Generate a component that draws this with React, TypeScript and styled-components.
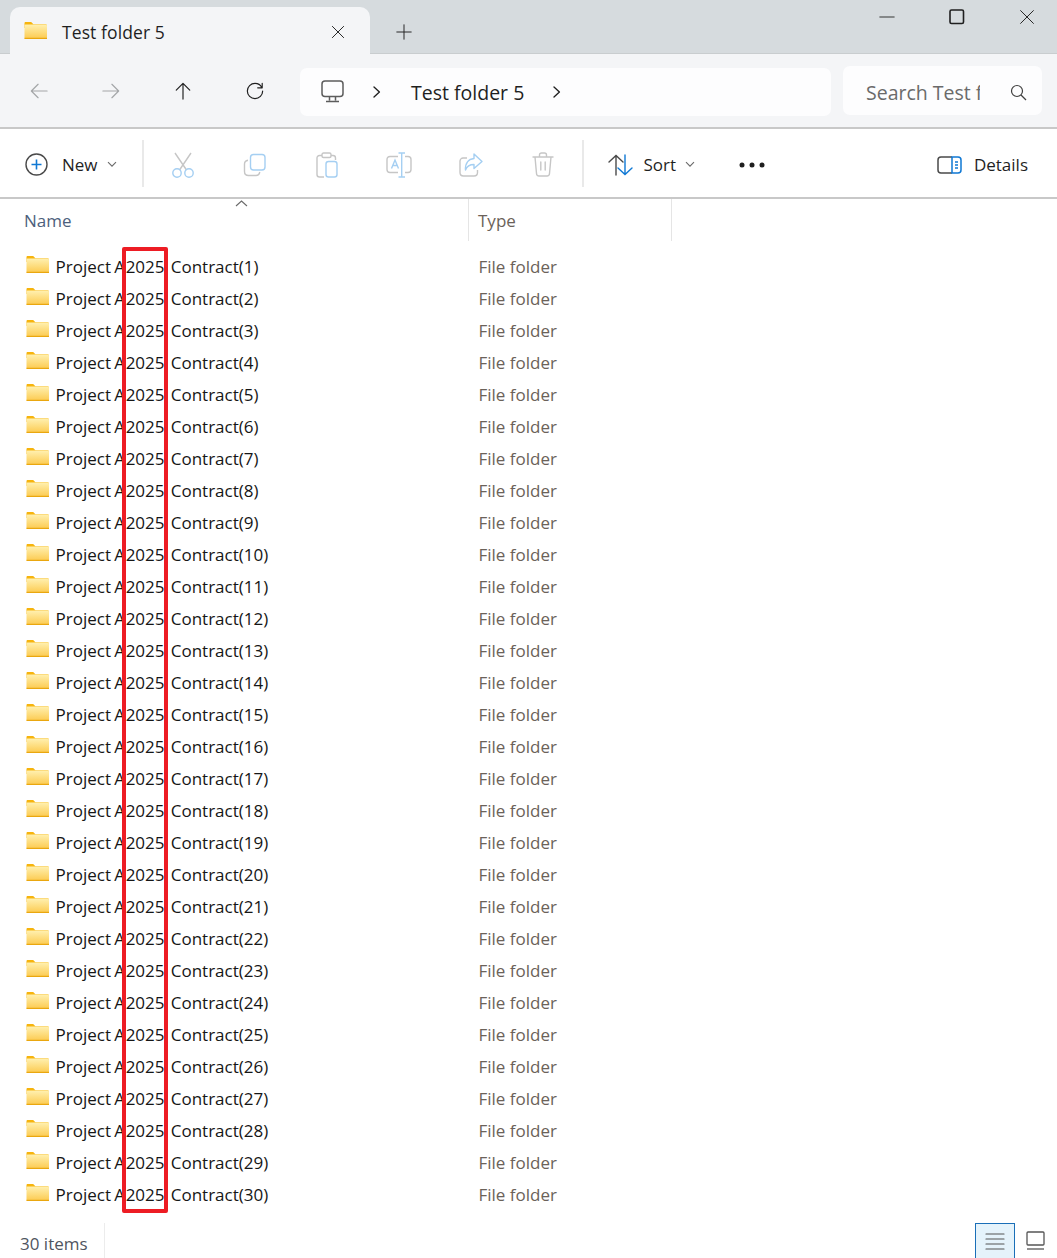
import React from 'react';
import styled, { createGlobalStyle } from 'styled-components';

const GlobalStyle = createGlobalStyle`
  html, body { margin: 0; padding: 0; background: #fff; }
  body { font-family: "Open Sans", "Noto Sans", "Liberation Sans", sans-serif; color: #1b1b1b; }
  * { box-sizing: border-box; }
`;

const Window = styled.div`
  position: relative;
  width: 1057px;
  height: 1258px;
  overflow: hidden;
  display: flex;
  flex-direction: column;
  background: #fff;
`;

const TabBar = styled.div`
  height: 54px;
  flex: none;
  display: flex;
  align-items: flex-end;
  padding-left: 10px;
  background: #d6dbde;
  border-bottom: 1px solid #c9cdcf;
`;

const Tab = styled.div`
  width: 360px;
  height: 47px;
  margin-bottom: -1px;
  padding: 2px 24px 0 14px;
  display: flex;
  align-items: center;
  background: #f4f5f7;
  border-radius: 10px 10px 0 0;
`;

const TabTitle = styled.span`
  flex: 1;
  margin-left: 15px;
  font-size: 17.5px;
  font-weight: 500;
  letter-spacing: 0.1px;
  color: #1f1f1f;
`;

const NewTab = styled.div`
  margin: 0 0 10px 26px;
  height: 22px;
  display: flex;
  align-items: center;
`;

const WindowControls = styled.div`
  margin-left: auto;
  align-self: flex-start;
  display: flex;
  align-items: center;
  gap: 54px;
  padding: 9px 22px 0 0;
`;

const NavRow = styled.div`
  height: 75px;
  flex: none;
  display: flex;
  align-items: center;
  padding: 0 15px 0 30px;
  background: #f4f5f7;
  border-bottom: 2px solid #c8c8c8;
`;

const NavButtons = styled.div`
  width: 270px;
  display: flex;
  gap: 54px;
`;

const AddressBox = styled.div`
  width: 531px;
  height: 48px;
  margin-top: 2px;
  display: flex;
  align-items: center;
  padding-left: 21px;
  background: #fdfdfe;
  border-radius: 7px;
`;

const Crumb = styled.span`
  margin: 2px 27px 0 28px;
  font-size: 19.5px;
  color: #1f1f1f;
`;

const Computer = styled.svg`
  margin-right: 27px;
`;

const SearchBox = styled.div`
  width: 199px;
  height: 49px;
  margin-left: 12px;
  display: flex;
  align-items: center;
  padding: 3px 15px 0 23px;
  background: #fdfdfe;
  border-radius: 7px;
`;

const SearchText = styled.span`
  width: 114px;
  height: 27px;
  overflow: hidden;
  white-space: nowrap;
  font-size: 19.5px;
  color: #6a6a6a;
`;

const SearchIcon = styled.svg`
  margin-left: auto;
`;

const CommandBar = styled.div`
  height: 70px;
  flex: none;
  display: flex;
  align-items: center;
  padding: 3px 29px 0 25px;
  border-bottom: 2px solid #c8c8c8;
`;

const Command = styled.div<{ $width?: number; $offset?: number }>`
  width: ${p => (p.$width ? `${p.$width}px` : 'auto')};
  margin-left: ${p => p.$offset ?? 0}px;
  display: flex;
  align-items: center;
  justify-content: ${p => (p.$width ? 'center' : 'flex-start')};
`;

const CommandLabel = styled.span<{ $gap: number }>`
  margin: 0 9px 0 ${p => p.$gap}px;
  font-size: 17px;
  color: #1f1f1f;
`;

const Divider = styled.div<{ $left: number; $right: number }>`
  width: 2px;
  height: 47px;
  margin: -3px ${p => p.$right}px 0 ${p => p.$left}px;
  background: #e9e9e9;
`;

const DetailsLabel = styled.span`
  margin-left: 12px;
  font-size: 17px;
  color: #1f1f1f;
`;

const Spacer = styled.div`
  flex: 1;
`;

const ColumnHeader = styled.div`
  position: relative;
  height: 42px;
  flex: none;
  display: flex;
  font-size: 17px;
`;

const SortCaret = styled.svg`
  position: absolute;
  left: 235px;
  top: 1px;
`;

const HeaderCell = styled.div<{ $width: number; $pad: number }>`
  width: ${p => p.$width}px;
  padding: 10px 0 0 ${p => p.$pad}px;
  border-right: 1px solid #e5e5e5;
  color: ${p => (p.$pad === 24 ? '#4d5f7c' : '#6b6259')};
`;

const FileList = styled.div`
  flex: 1;
  padding-top: 10px;
`;

const FileRow = styled.div`
  height: 32px;
  display: flex;
  align-items: center;
  padding: 0 0 2px 26px;
  font-size: 17px;
`;

const FolderSlot = styled.div<{ $lift: number }>`
  display: flex;
  margin-bottom: ${p => p.$lift}px;
`;

const FileName = styled.span`
  width: 423px;
  margin-left: 6.5px;
  white-space: nowrap;
  word-spacing: -1.2px;
  color: #161616;
`;

const Year = styled.span`
  margin: 0 3px 0 -2.5px;
`;

const FileType = styled.span`
  color: #6b6259;
`;

const StatusBar = styled.div`
  height: 47px;
  flex: none;
  display: flex;
  align-items: flex-end;
  padding: 0 2px 0 20px;
`;

const ItemCount = styled.span`
  width: 85px;
  height: 35px;
  padding-top: 5px;
  display: flex;
  align-items: center;
  font-size: 17px;
  color: #4f5560;
  border-right: 1px solid #ececec;
`;

const ViewToggle = styled.div<{ $active?: boolean }>`
  width: 40px;
  height: 35px;
  display: flex;
  align-items: center;
  justify-content: center;
  background: ${p => (p.$active ? '#e5f3fb' : 'transparent')};
  border: ${p => (p.$active ? '1px solid #1a6fb8' : 'none')};
  border-bottom: none;
`;

const Highlight = styled.div`
  position: absolute;
  left: 122px;
  top: 247px;
  width: 46px;
  height: 966px;
  border: 4px solid #ed1c24;
  border-radius: 2px;
  pointer-events: none;
`;

const FolderIcon = ({ id }: { id: string }) => (
  <svg width="23" height="17" viewBox="0 0 23 17">
    <defs>
      <linearGradient id={id} x1="0" y1="0" x2="0" y2="1">
        <stop offset="0" stopColor="#fff0b0" />
        <stop offset="1" stopColor="#fcca4e" />
      </linearGradient>
    </defs>
    <path d="M0.5 1.2C0.5 0.6 1 0 1.6 0H7.2L9.4 2.2H21.6C22.3 2.2 23 2.9 23 3.6V6H0.5Z" fill="#f6b40e" />
    <rect x="0.5" y="2.6" width="22.5" height="14.4" rx="1" fill={`url(#${id})`} />
    <rect x="0.5" y="15.8" width="22.5" height="1.2" fill="#eaa70f" />
  </svg>
);

const Line = ({ d, color = '#1f1f1f', size = 20, width = 1.3 }: { d: string; color?: string; size?: number; width?: number }) => (
  <svg width={size} height={size} viewBox="0 0 20 20" fill="none" stroke={color} strokeWidth={width} strokeLinecap="round" strokeLinejoin="round">
    <path d={d} />
  </svg>
);

const Cut = () => (
  <svg width="24" height="26" viewBox="0 0 24 26" fill="none" strokeWidth="1.4">
    <path d="M4 1L15.5 18M20 1L8.5 18" stroke="#c6c6c6" />
    <circle cx="6" cy="21" r="4.2" stroke="#a5cff2" />
    <circle cx="18" cy="21" r="4.2" stroke="#a5cff2" />
  </svg>
);

const Copy = () => (
  <svg width="24" height="24" viewBox="0 0 24 24" fill="none" strokeWidth="1.4">
    <path d="M5 7.2C2.8 7.6 1.5 9 1.5 11V18.5C1.5 21 3 22.5 5.5 22.5H13C15 22.5 16.4 21.2 16.8 19" stroke="#c6c6c6" />
    <rect x="7.5" y="1.5" width="14.5" height="15.5" rx="3" stroke="#a5cff2" />
  </svg>
);

const Paste = () => (
  <svg width="22" height="26" viewBox="0 0 22 26" fill="none" strokeWidth="1.4">
    <path d="M6 3.5H3.5C2 3.5 1 4.5 1 6V22.5C1 24 2 25 3.5 25H8M15 3.5H17C18.5 3.5 19.5 4.5 19.5 6V8" stroke="#c6c6c6" />
    <rect x="6" y="1" width="9" height="4.5" rx="1.5" stroke="#c6c6c6" />
    <rect x="10" y="9.5" width="11" height="15.5" rx="2.5" stroke="#a5cff2" />
  </svg>
);

const Rename = () => (
  <svg width="26" height="26" viewBox="0 0 26 26" fill="none" strokeWidth="1.4">
    <path d="M12 4.5H4C2.2 4.5 1 5.7 1 7.5V17.5C1 19.3 2.2 20.5 4 20.5H12M19 4.5H22C23.8 4.5 25 5.7 25 7.5V17.5C25 19.3 23.8 20.5 22 20.5H19" stroke="#c6c6c6" />
    <path d="M12.5 1H19M15.7 1V25M12.5 25H19M5.5 16.5L9 8L12.5 16.5M6.8 13.5H11.2" stroke="#a5cff2" />
  </svg>
);

const Share = () => (
  <svg width="24" height="24" viewBox="0 0 24 24" fill="none" strokeWidth="1.4" strokeLinejoin="round">
    <path d="M8 5H4C2.5 5 1 6.5 1 8V19.5C1 21.5 2.5 23 4.5 23H15C17 23 18.5 21.5 18.5 19.5V17" stroke="#c6c6c6" />
    <path d="M15 1L23 8.5L15 15.5V11.5C10.5 11.5 8 13 6.5 17C6 10 9.5 6 15 5.5Z" stroke="#a5cff2" />
  </svg>
);

const Trash = () => (
  <svg width="22" height="25" viewBox="0 0 22 25" fill="none" stroke="#c6c6c6" strokeWidth="1.4" strokeLinecap="round">
    <path d="M1 5H21M7.5 5V3C7.5 1.8 8.3 1 9.5 1H12.5C13.7 1 14.5 1.8 14.5 3V5M3 5L4.5 21.5C4.6 23 5.6 24 7 24H15C16.4 24 17.4 23 17.5 21.5L19 5M8.8 10V18M13.2 10V18" />
  </svg>
);

const Chevron = () => (
  <svg width="10" height="7" viewBox="0 0 10 7" fill="none" stroke="#6a6a6a" strokeWidth="1.1">
    <path d="M1 1.2L5 5.2L9 1.2" />
  </svg>
);

const items = Array.from({ length: 30 }, (_, i) => i + 1);

export default function App() {
  return (
    <Window>
      <GlobalStyle />
      <TabBar>
        <Tab>
          <FolderSlot $lift={2}><FolderIcon id="tab-folder" /></FolderSlot>
          <TabTitle>Test folder 5</TabTitle>
          <Line size={16} width={1.2} d="M3 3L17 17M17 3L3 17" />
        </Tab>
        <NewTab>
          <Line size={16} width={1.2} d="M10 1V19M1 10H19" />
        </NewTab>
        <WindowControls>
          <Line size={16} width={1.1} d="M1 10H19" />
          <svg width="16" height="16" viewBox="0 0 16 16" fill="none" stroke="#1f1f1f" strokeWidth="1.6">
            <rect x="1" y="1" width="13.5" height="13.5" rx="1.5" />
          </svg>
          <Line size={16} width={1.2} d="M2 2L18 18M18 2L2 18" />
        </WindowControls>
      </TabBar>
      <NavRow>
        <NavButtons>
          <Line size={18} color="#a4a6a8" d="M19 10H1.5M9 2.5L1.5 10L9 17.5" />
          <Line size={18} color="#a4a6a8" d="M1 10H18.5M11 2.5L18.5 10L11 17.5" />
          <Line size={18} d="M10 19V1.5M2.5 9L10 1.5L17.5 9" />
          <Line size={18} d="M17.5 6C16 3 13.2 1.5 10 1.5C5.3 1.5 1.5 5.3 1.5 10C1.5 14.7 5.3 18.5 10 18.5C14.7 18.5 18.5 14.7 18.5 10M18 1.5V6.5H13" />
        </NavButtons>
        <AddressBox>
          <Computer width="23" height="23" viewBox="0 0 23 23" fill="none" stroke="#5c5c5c" strokeWidth="1.5">
            <rect x="1" y="1" width="21" height="15.5" rx="3" />
            <path d="M8.5 17V20.5M14.5 17V20.5M5 21.5H18" />
          </Computer>
          <Line size={12} width={2.2} d="M5 1.5L14 10L5 18.5" />
          <Crumb>Test folder 5</Crumb>
          <Line size={12} width={2.2} d="M5 1.5L14 10L5 18.5" />
        </AddressBox>
        <SearchBox>
          <SearchText>Search Test folder 5</SearchText>
          <SearchIcon width="17" height="17" viewBox="0 0 17 17" fill="none" stroke="#3f3f3f" strokeWidth="1.2">
            <circle cx="7" cy="7" r="5.5" />
            <path d="M11 11L16 16" />
          </SearchIcon>
        </SearchBox>
      </NavRow>
      <CommandBar>
        <Command>
          <svg width="23" height="23" viewBox="0 0 23 23" fill="none" strokeWidth="1.4">
            <circle cx="11.5" cy="11.5" r="10.5" stroke="#4a4a4a" />
            <path d="M11.5 6.5V16.5M6.5 11.5H16.5" stroke="#0f78d4" strokeWidth="1.6" />
          </svg>
          <CommandLabel $gap={14}>New</CommandLabel>
          <Chevron />
        </Command>
        <Divider $left={25} $right={3} />
        <Command $width={72}><Cut /></Command>
        <Command $width={72}><Copy /></Command>
        <Command $width={72}><Paste /></Command>
        <Command $width={72}><Rename /></Command>
        <Command $width={72}><Share /></Command>
        <Command $width={72}><Trash /></Command>
        <Divider $left={3} $right={24} />
        <Command>
          <svg width="25" height="22" viewBox="0 0 25 22" fill="none" strokeWidth="1.4" strokeLinecap="round">
            <path d="M8 21V1.5M1 8L8 1.5L15 8" stroke="#4a4a4a" />
            <path d="M17 1V20.5M10 14L17 20.5L24 14" stroke="#0f78d4" />
          </svg>
          <CommandLabel $gap={11}>Sort</CommandLabel>
          <Chevron />
        </Command>
        <Command $width={48} $offset={33}>
          <svg width="26" height="6" viewBox="0 0 26 6" fill="#1f1f1f">
            <circle cx="3" cy="3" r="2.5" />
            <circle cx="13" cy="3" r="2.5" />
            <circle cx="23" cy="3" r="2.5" />
          </svg>
        </Command>
        <Spacer />
        <Command>
          <svg width="25" height="18" viewBox="0 0 25 18" fill="none" strokeWidth="1.5">
            <path d="M15 1H4C2.3 1 1 2.3 1 4V14C1 15.7 2.3 17 4 17H15" stroke="#4a4a4a" />
            <path d="M15 1H21C22.7 1 24 2.3 24 4V14C24 15.7 22.7 17 21 17H15Z" stroke="#0f78d4" />
            <path d="M18 6H21M18 9H21M18 12H21" stroke="#0f78d4" />
          </svg>
          <DetailsLabel>Details</DetailsLabel>
        </Command>
      </CommandBar>
      <ColumnHeader>
        <SortCaret width="13" height="7" viewBox="0 0 13 7" fill="none" stroke="#6a6a6a" strokeWidth="1.1">
          <path d="M1 6L6.5 1L12 6" />
        </SortCaret>
        <HeaderCell $width={469} $pad={24}>Name</HeaderCell>
        <HeaderCell $width={203} $pad={9}>Type</HeaderCell>
      </ColumnHeader>
      <FileList>
        {items.map(n => (
          <FileRow key={n}>
            <FolderSlot $lift={4}><FolderIcon id={`folder-${n}`} /></FolderSlot>
            <FileName>Project A <Year>2025</Year> Contract({n})</FileName>
            <FileType>File folder</FileType>
          </FileRow>
        ))}
      </FileList>
      <StatusBar>
        <ItemCount>30 items</ItemCount>
        <Spacer />
        <ViewToggle $active>
          <Line size={20} color="#555" width={1.2} d="M1 3H19M1 8H19M1 13H19M1 18H19" />
        </ViewToggle>
        <ViewToggle>
          <svg width="19" height="19" viewBox="0 0 19 19" fill="none" stroke="#555" strokeWidth="1.3">
            <rect x="1" y="1" width="17" height="13" rx="1" />
            <path d="M1 18H18" />
          </svg>
        </ViewToggle>
      </StatusBar>
      <Highlight />
    </Window>
  );
}
